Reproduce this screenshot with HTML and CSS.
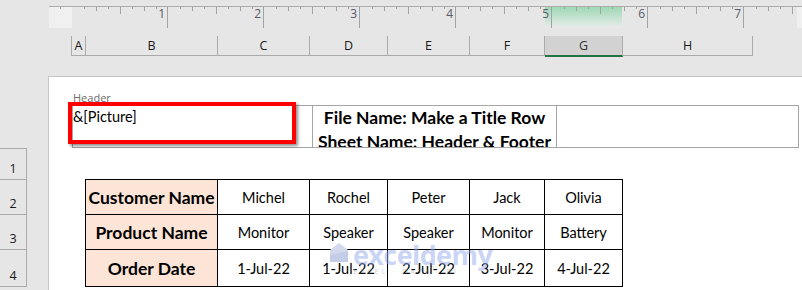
FILE: index.html
```html
<!DOCTYPE html>
<html>
<head>
  <link rel="stylesheet" href="styles.css">
</head>
<body>

  <div class="top">
    <svg class="ruler" width="753" height="22" viewBox="0 0 753 22">
      <defs>
        <linearGradient id="sel" x1="0" y1="0" x2="0" y2="1">
          <stop offset="0" stop-color="#9fd8b6"/>
          <stop offset="1" stop-color="#e9ece9"/>
        </linearGradient>
        <pattern id="ticks" x="23" y="0" width="96" height="22" patternUnits="userSpaceOnUse">
          <g stroke="#a3a3a3" stroke-width="1">
            <line x1="12.5" y1="1" x2="12.5" y2="3"/>
            <line x1="24.5" y1="1" x2="24.5" y2="5"/>
            <line x1="36.5" y1="1" x2="36.5" y2="3"/>
            <line x1="48.5" y1="1" x2="48.5" y2="8"/>
            <line x1="60.5" y1="1" x2="60.5" y2="3"/>
            <line x1="72.5" y1="1" x2="72.5" y2="5"/>
            <line x1="84.5" y1="1" x2="84.5" y2="3"/>
            <line x1="95.5" y1="1" x2="95.5" y2="22"/>
          </g>
        </pattern>
      </defs>
      <rect x="496" y="1" width="77" height="21" fill="url(#sel)"/>
      <rect x="0" y="1" width="23" height="21" fill="#f0f0f0"/>
      <rect x="748" y="1" width="5" height="21" fill="#f0f0f0"/>
      <rect x="24" y="0" width="724" height="22" fill="url(#ticks)"/>
      <line x1="11.5" y1="1" x2="11.5" y2="3" stroke="#a3a3a3"/>
      <line x1="0" y1="0.5" x2="753" y2="0.5" stroke="#acacac"/>
      <g class="ruler-num" text-anchor="end">
        <text x="116" y="12">1</text>
        <text x="212" y="12">2</text>
        <text x="308" y="12">3</text>
        <text x="404" y="12">4</text>
        <text x="500" y="12">5</text>
        <text x="596" y="12">6</text>
        <text x="692" y="12">7</text>
      </g>
    </svg>

    <div class="col-heads">
      <div class="col-head col-a">A</div>
      <div class="col-head col-b">B</div>
      <div class="col-head col-c">C</div>
      <div class="col-head col-d">D</div>
      <div class="col-head col-e">E</div>
      <div class="col-head col-f">F</div>
      <div class="col-head col-g selected">G</div>
      <div class="col-head col-h">H</div>
    </div>
  </div>

  <div class="sheet">
    <div class="row-heads">
      <div class="row-head row-1">1</div>
      <div class="row-head row-2">2</div>
      <div class="row-head row-3">3</div>
      <div class="row-head row-4">4</div>
    </div>

    <div class="page">
      <div class="header-label">Header</div>

      <div class="header-box">
        <div class="hdr-left">
          &amp;[Picture]
          <div class="red-mark"></div>
        </div>
        <div class="hdr-mid">File Name: Make a Title Row<br>Sheet Name: Header &amp; Footer</div>
        <div class="hdr-right"></div>
      </div>

      <div class="table-wrap">
        <table class="data">
          <colgroup>
            <col class="c-label">
            <col class="c-b">
            <col class="c-c">
            <col class="c-d">
            <col class="c-e">
            <col class="c-f">
          </colgroup>
          <tr class="r1">
            <th>Customer Name</th>
            <td>Michel</td>
            <td>Rochel</td>
            <td>Peter</td>
            <td>Jack</td>
            <td>Olivia</td>
          </tr>
          <tr class="r2">
            <th>Product Name</th>
            <td>Monitor</td>
            <td>Speaker</td>
            <td>Speaker</td>
            <td>Monitor</td>
            <td>Battery</td>
          </tr>
          <tr class="r3">
            <th>Order Date</th>
            <td>1-Jul-22</td>
            <td>1-Jul-22</td>
            <td>2-Jul-22</td>
            <td>3-Jul-22</td>
            <td>4-Jul-22</td>
          </tr>
        </table>

        <div class="watermark">
          <svg width="18" height="19" viewBox="0 0 18 19">
            <path d="M9 0 L18 7 L18 19 L0 19 L0 7 Z" fill="#d3d9ec"/>
            <path d="M0 12 L18 8 L18 19 L0 19 Z" fill="#c4cde8"/>
          </svg>
          <div class="wm-text">
            <div class="wm-name">exceldemy</div>
            <div class="wm-sub">EXCEL · DATA · BI</div>
          </div>
        </div>
      </div>
    </div>
  </div>

</body>
</html>
```

FILE: styles.css
```css
body {
  margin: 0;
  width: 802px;
  height: 290px;
  overflow: hidden;
  background-color: #e6e6e6;
  font-family: Lato, "Liberation Sans", sans-serif;
  color: #000;
}

.top {
  padding-top: 6px;
}

.ruler {
  display: block;
  margin-left: 49px;
}

.ruler-num {
  font-family: "Open Sans", sans-serif;
  font-size: 12px;
  fill: #5a5a6a;
}

.col-heads {
  display: flex;
  margin-top: 8px;
  margin-left: 71px;
  height: 19px;
  width: 681px;
  border-left: 1px solid #ababab;
  border-bottom: 1px solid #ababab;
}

.col-head {
  box-sizing: border-box;
  border-right: 1px solid #ababab;
  text-align: center;
  font-family: "Open Sans", sans-serif;
  font-size: 12.5px;
  line-height: 19px;
  color: #1a1a1a;
}

.col-a { width: 14px; }
.col-b { width: 132px; }
.col-c { width: 92px; }
.col-d { width: 78px; }
.col-e { width: 82px; }
.col-f { width: 75px; }
.col-g { width: 78px; }
.col-h { width: 130px; }

.col-head.selected {
  background-color: #d2d2d2;
  border-bottom: 2px solid #217346;
  height: 21px;
  color: #333;
}

.sheet {
  display: flex;
  align-items: flex-start;
}

.row-heads {
  width: 27px;
  margin-top: 92px;
  margin-right: 21px;
  border-top: 1px solid #ababab;
  border-right: 1px solid #ababab;
  box-sizing: border-box;
}

.row-head {
  display: flex;
  align-items: flex-end;
  justify-content: center;
  border-bottom: 1px solid #ababab;
  font-family: "Open Sans", sans-serif;
  font-size: 12.5px;
  line-height: 14px;
  padding-bottom: 3px;
  box-sizing: border-box;
  color: #1a1a1a;
}

.row-1 { height: 31px; }
.row-2 { height: 35px; }
.row-3 { height: 35px; }
.row-4 { height: 37px; }

.page {
  flex: 1;
  height: 213px;
  margin-top: 20px;
  background: #fff;
  border-left: 1px solid #c6c6c6;
  border-top: 1px solid #c6c6c6;
}

.header-label {
  padding-top: 14px;
  padding-left: 24px;
  font-family: "Open Sans", sans-serif;
  font-size: 11px;
  line-height: 14px;
  color: #6e6e6e;
}

.header-box {
  display: flex;
  margin-left: 23px;
  width: 727px;
  height: 43px;
  box-sizing: border-box;
  border: 1px solid #a6a6a6;
}

.hdr-left {
  position: relative;
  width: 240px;
  box-sizing: border-box;
  border-right: 1px solid #a6a6a6;
  padding-top: 3px;
  font-size: 14.5px;
  line-height: 16px;
}

.red-mark {
  position: absolute;
  left: -5px;
  top: -4px;
  width: 228px;
  height: 42px;
  box-sizing: border-box;
  border: 4px solid #ff0000;
  box-shadow: 2px 2px 3px rgba(0, 0, 0, 0.45);
}

.hdr-mid {
  width: 244px;
  box-sizing: border-box;
  border-right: 1px solid #a6a6a6;
  overflow: hidden;
  white-space: nowrap;
  text-align: center;
  font-weight: bold;
  font-size: 17.5px;
  line-height: 24px;
}

.hdr-right {
  flex: 1;
}

.table-wrap {
  position: relative;
  margin-top: 31px;
  margin-left: 36px;
}

.data {
  border-collapse: collapse;
  table-layout: fixed;
  width: 537px;
}

.c-label { width: 132px; }
.c-b { width: 92px; }
.c-c { width: 78px; }
.c-d { width: 82px; }
.c-e { width: 75px; }
.c-f { width: 78px; }

.data th,
.data td {
  border: 1px solid #000;
  padding: 0;
  text-align: center;
  white-space: nowrap;
}

.data th {
  background-color: #fce4d6;
  font-size: 17.5px;
  font-weight: bold;
}

.data td {
  font-size: 14.5px;
}

.r1 { height: 35px; }
.r2 { height: 35px; }
.r3 { height: 37px; }

.watermark {
  position: absolute;
  left: 245px;
  top: 64px;
  display: flex;
  align-items: flex-start;
  gap: 5px;
  pointer-events: none;
}

.wm-text {
  display: flex;
  flex-direction: column;
}

.wm-name {
  font-family: "Open Sans", sans-serif;
  font-weight: bold;
  font-size: 27px;
  line-height: 24px;
  letter-spacing: -0.6px;
  color: rgba(150, 172, 235, 0.5);
}

.wm-sub {
  font-family: "Open Sans", sans-serif;
  font-size: 8px;
  letter-spacing: 2.5px;
  line-height: 8px;
  color: rgba(140, 140, 150, 0.4);
}
```
